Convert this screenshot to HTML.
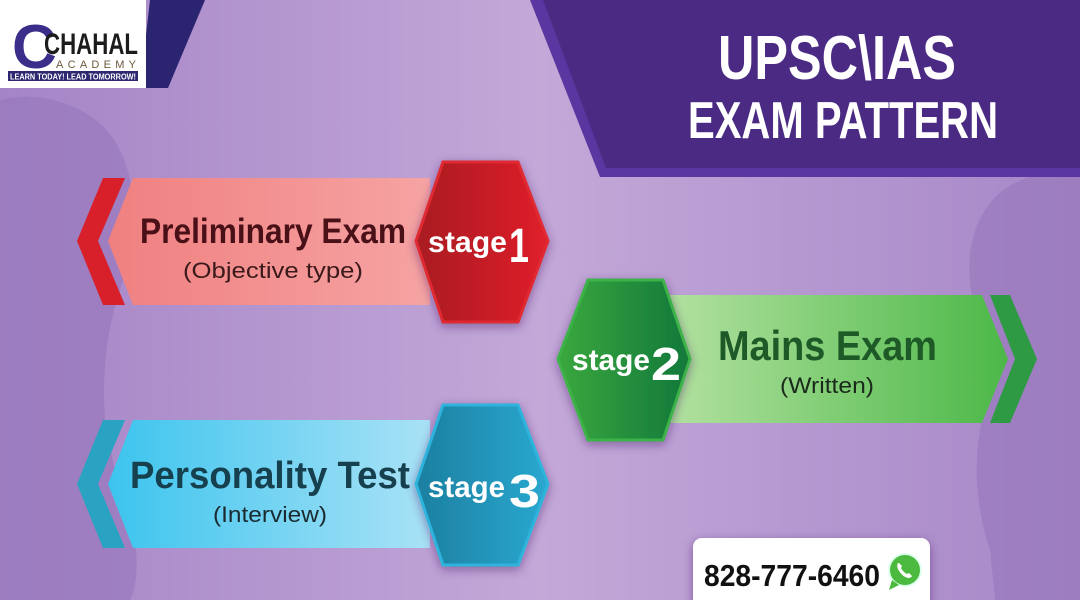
<!DOCTYPE html>
<html><head><meta charset="utf-8"><style>
html,body{margin:0;padding:0;width:1080px;height:600px;overflow:hidden}
svg{display:block}
text{font-family:"Liberation Sans",sans-serif;font-weight:bold}
text.n{font-weight:normal}
</style></head><body>
<svg width="1080" height="600" viewBox="0 0 1080 600" xmlns="http://www.w3.org/2000/svg">
<defs>
<linearGradient id="bg" x1="0" y1="0" x2="1" y2="0">
<stop offset="0" stop-color="#a584c6"/><stop offset="0.5" stop-color="#c3a8d8"/><stop offset="1" stop-color="#a787c8"/></linearGradient>
<linearGradient id="pink" x1="0" x2="1"><stop offset="0" stop-color="#f08080"/><stop offset="1" stop-color="#f6a3a3"/></linearGradient>
<linearGradient id="green" x1="0" x2="1"><stop offset="0" stop-color="#b5e2a2"/><stop offset="1" stop-color="#4cb848"/></linearGradient>
<linearGradient id="blue" x1="0" x2="1"><stop offset="0" stop-color="#3cc4ee"/><stop offset="1" stop-color="#a9e2f6"/></linearGradient>
<linearGradient id="red" x1="0" x2="1"><stop offset="0" stop-color="#a81a22"/><stop offset="1" stop-color="#e0202a"/></linearGradient>
<linearGradient id="gh" x1="0" x2="1"><stop offset="0" stop-color="#3aa83e"/><stop offset="1" stop-color="#12783a"/></linearGradient>
<linearGradient id="bh" x1="0" x2="1"><stop offset="0" stop-color="#1c7fa0"/><stop offset="1" stop-color="#2aa8d0"/></linearGradient>
<filter id="sh" x="-20%" y="-20%" width="140%" height="140%"><feDropShadow dx="0" dy="3" stdDeviation="5" flood-color="#3a1a5a" flood-opacity="0.45"/></filter>
</defs>
<rect width="1080" height="600" fill="url(#bg)"/>
<!-- emblem silhouettes -->
<g fill="#9676ba" opacity="0.6">
<path d="M0 100 Q40 90 80 110 Q120 130 130 180 Q140 230 120 290 Q100 350 105 420 Q115 480 135 540 Q140 580 130 600 L0 600 Z"/>
<path d="M1080 170 Q1010 170 985 210 Q960 250 975 310 Q990 370 980 430 Q970 490 990 550 L995 600 L1080 600 Z"/>
</g>
<!-- logo -->
<polygon points="150,0 205,0 168,88 140,88" fill="#2b2470"/>
<rect x="0" y="0" width="146" height="88" fill="#ffffff"/>
<text x="12" y="68" font-size="62" fill="#3b2e8a">C</text>
<text x="44" y="54" font-size="30" fill="#1c1c1c" textLength="94" lengthAdjust="spacingAndGlyphs">CHAHAL</text>
<text x="56" y="68" font-size="11" fill="#6a5a3a" class="n" textLength="80" lengthAdjust="spacing">ACADEMY</text>
<rect x="8" y="71" width="130" height="10" fill="#2d2870"/>
<text x="10" y="79.5" font-size="8" fill="#fff" textLength="126" lengthAdjust="spacingAndGlyphs">LEARN TODAY! LEAD TOMORROW!</text>
<!-- top right panel -->
<polygon points="530,0 1080,0 1080,177 600,177" fill="#5a36a0"/>
<polygon points="543,0 1080,0 1080,168 606,168" fill="#4a2a82"/>
<text x="718" y="79" font-size="62" fill="#fff" textLength="238" lengthAdjust="spacingAndGlyphs">UPSC\IAS</text>
<text x="688" y="138" font-size="52" fill="#fff" textLength="310" lengthAdjust="spacingAndGlyphs">EXAM PATTERN</text>
<!-- banner 1 -->
<polygon points="103,178 125,178 98,241 125,305 103,305 77,241" fill="#d8202a"/>
<polygon points="133,178 430,178 430,305 133,305 108,241" fill="url(#pink)"/>
<text x="140" y="243" font-size="35" fill="#4a1018" textLength="266" lengthAdjust="spacingAndGlyphs">Preliminary Exam</text>
<text x="183" y="278" font-size="22" fill="#3a1a1a" class="n" textLength="180" lengthAdjust="spacingAndGlyphs">(Objective type)</text>
<polygon points="416,241 443,162 518,162 548,241 518,322 443,322" fill="url(#red)" stroke="#e02a30" stroke-width="3" filter="url(#sh)"/>
<text x="428" y="252" font-size="30" fill="#fff" textLength="79" lengthAdjust="spacingAndGlyphs">stage</text>
<text x="509" y="262" font-size="48" fill="#fff" textLength="20" lengthAdjust="spacingAndGlyphs">1</text>
<!-- banner 2 -->
<polygon points="990,295 1010,295 1037,359 1010,423 990,423 1015,359" fill="#2f9a44"/>
<polygon points="660,295 982,295 1008,359 982,423 660,423" fill="url(#green)"/>
<text x="718" y="360" font-size="42" fill="#1d5a28" textLength="219" lengthAdjust="spacingAndGlyphs">Mains Exam</text>
<text x="780" y="393" font-size="22" fill="#1a2a1a" class="n" textLength="94" lengthAdjust="spacingAndGlyphs">(Written)</text>
<polygon points="558,359 588,280 663,280 690,359 663,440 588,440" fill="url(#gh)" stroke="#3db24a" stroke-width="3" filter="url(#sh)"/>
<text x="572" y="370" font-size="30" fill="#fff" textLength="78" lengthAdjust="spacingAndGlyphs">stage</text>
<text x="651" y="380" font-size="46" fill="#fff" textLength="30" lengthAdjust="spacingAndGlyphs">2</text>
<!-- banner 3 -->
<polygon points="103,420 125,420 98,484 125,548 103,548 77,484" fill="#2aa3c2"/>
<polygon points="133,420 430,420 430,548 133,548 108,484" fill="url(#blue)"/>
<text x="130" y="488" font-size="38" fill="#16404e" textLength="280" lengthAdjust="spacingAndGlyphs">Personality Test</text>
<text x="213" y="522" font-size="22" fill="#1a2a30" class="n" textLength="114" lengthAdjust="spacingAndGlyphs">(Interview)</text>
<polygon points="416,484 443,405 518,405 548,484 518,565 443,565" fill="url(#bh)" stroke="#2eb4dc" stroke-width="3" filter="url(#sh)"/>
<text x="428" y="497" font-size="30" fill="#fff" textLength="77" lengthAdjust="spacingAndGlyphs">stage</text>
<text x="509" y="507" font-size="46" fill="#fff" textLength="31" lengthAdjust="spacingAndGlyphs">3</text>
<!-- phone -->
<rect x="693" y="538" width="237" height="70" rx="9" fill="#fff" filter="url(#sh)"/>
<text x="704" y="586" font-size="31" fill="#111" textLength="176" lengthAdjust="spacingAndGlyphs">828-777-6460</text>
<circle cx="905" cy="570" r="16" fill="#4cba3e" stroke="#dfe" stroke-width="2"/>
<polygon points="892,580 889,590 899,585" fill="#4cba3e"/>
<path d="M898 563 q-2 3 1 8 q4 6 9 7 q3 0 4 -2 l-3 -3 l-2 1 q-4 -2 -6 -6 l1 -2 l-3 -3 z" fill="#fff"/>
</svg>
</body></html>
